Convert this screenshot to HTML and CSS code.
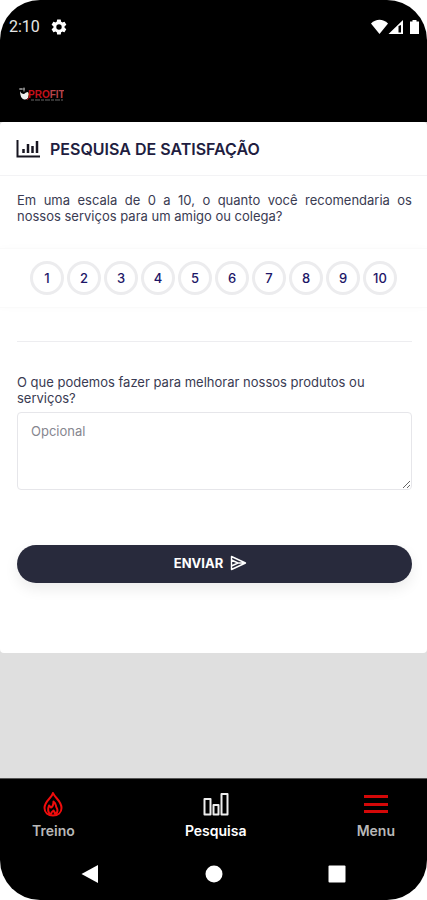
FILE: index.html
```html
<!DOCTYPE html>
<html lang="pt-BR">
<head>
<meta charset="utf-8">
<meta name="viewport" content="width=device-width, initial-scale=1">
<title>Pesquisa de Satisfação</title>
<link rel="stylesheet" href="styles.css">
</head>
<body>
<div class="phone">
  <div class="status-bar">
    <span class="clock">2:10</span>
    <svg class="gear" viewBox="0 0 24 24" width="18" height="18" aria-hidden="true"><path fill="#fff" d="M19.4 13a7.500 7.500 0 0 0 0-2l2.100-1.600a.5.5 0 0 0 .1-.7l-2-3.400a.5.5 0 0 0-.6-.2l-2.500 1a7.300 7.300 0 0 0-1.700-1L14.400 2.400a.5.5 0 0 0-.5-.4h-4a.5.5 0 0 0-.5.4L9 5.100a7.300 7.300 0 0 0-1.600 1l-2.500-1a.5.5 0 0 0-.6.200l-2 3.400a.5.5 0 0 0 .1.700L4.600 11a7.500 7.500 0 0 0 0 2l-2.200 1.600a.5.5 0 0 0-.1.700l2 3.400c.1.200.4.300.6.200l2.500-1c.5.400 1.100.8 1.700 1l.3 2.700c0 .2.200.4.500.4h4c.2 0 .5-.2.500-.4l.4-2.700a7.300 7.300 0 0 0 1.600-1l2.500 1c.2.100.5 0 .6-.2l2-3.400a.5.5 0 0 0-.1-.7zM12 15.600a3.600 3.600 0 1 1 0-7.200 3.600 3.600 0 0 1 0 7.200z"/></svg>
    <svg class="signals" viewBox="0 0 50 16" width="50" height="16" aria-hidden="true">
      <path fill="#fff" d="M0 4.500C5-.4 12-.4 17 4.500L8.500 15z"/>
      <path fill="#fff" fill-rule="evenodd" d="M32 1v14H17.500zM27.500 7v6.500H30V6z"/>
      <path fill="#fff" d="M39 2.500h2.500V1h4v1.500H48V15h-9z"/>
    </svg>
  </div>
  <header class="brand">
    <svg class="logo" viewBox="0 0 46 16" width="46" height="16" role="img" aria-label="Profit">
      <path fill="#eee" d="M2 5q1 3 4 3 2-2 4-2l1 2-1 4q-2 2-4 1.500Q2 12 2 5z"/>
      <path stroke="#aaa" stroke-width="1" fill="none" d="M1 3h6M6 1.500v4M3 2v2"/>
      <path stroke="#b00a12" stroke-width="1" fill="none" d="M9 14l3-4"/>
      <text x="10" y="12" class="logo-name"><tspan class="red">PRO</tspan><tspan class="pink">FIT</tspan></text>
      <path stroke="#666" stroke-width="1" stroke-dasharray="3 1 5 1" d="M13 14h32"/>
    </svg>
  </header>

  <main class="content">
    <form class="card">
      <div class="card-head">
        <svg viewBox="0 0 24 18" width="24" height="18" aria-hidden="true"><path fill="none" stroke="#171520" stroke-width="2" d="M1.500 0v16.500H24"/><path stroke="#171520" stroke-width="2.500" d="M7.500 9v4M12 4v9M16.500 6v7M21 1v12"/></svg>
        <h1>PESQUISA DE SATISFAÇÃO</h1>
      </div>
      <p class="question" id="score-label">Em uma escala de 0 a 10, o quanto você recomendaria os nossos serviços para um amigo ou colega?</p>
      <div class="scores" role="group" aria-labelledby="score-label">
        <button type="button">1</button>
        <button type="button">2</button>
        <button type="button">3</button>
        <button type="button">4</button>
        <button type="button">5</button>
        <button type="button">6</button>
        <button type="button">7</button>
        <button type="button">8</button>
        <button type="button">9</button>
        <button type="button">10</button>
      </div>
      <hr>
      <div class="field">
        <label for="comment">O que podemos fazer para melhorar nossos produtos ou serviços?</label>
        <textarea id="comment" placeholder="Opcional"></textarea>
      </div>
      <div class="actions">
        <button class="send" type="submit">ENVIAR
          <svg viewBox="0 0 17 16" width="17" height="16" aria-hidden="true"><path fill="none" stroke="#fff" stroke-width="1.400" stroke-linejoin="round" d="M1.500 1.500L15.500 8l-14 6.500zM1.500 5L8 8l-6.500 3M8 8h6"/></svg>
        </button>
      </div>
    </form>
  </main>

  <nav class="tabs">
    <a href="#treino">
      <svg viewBox="0 0 24 26" width="24" height="26" fill="none" stroke="#f00c0c" stroke-width="2" stroke-linejoin="round" aria-hidden="true"><path d="M12 2C11 7 3.500 10 3.500 17c0 4.500 3.500 7.500 8.500 7.500s8.500-3 8.500-7.500C20.500 10 14 7 12 2z"/><path d="M9 23.500C6 20 7 17 8 14.500l2 2c2-1 2.500-3.500 2.500-6 3 2 2 4.500 3 6 2 3 1 5-1 7M10 23.500c0-2 1-3 2.500-4 1 1 1.500 2 1.500 4"/></svg>
      <span>Treino</span>
    </a>
    <a href="#pesquisa" class="active" aria-current="page">
      <svg viewBox="0 0 26 26" width="26" height="26" fill="none" stroke="#eee" stroke-width="2" stroke-linejoin="round" aria-hidden="true"><path d="M1.500 8h6v15.500h-6zM10.500 14h5v9.500h-5zM18.500 3h6v20.500h-6z"/></svg>
      <span>Pesquisa</span>
    </a>
    <a href="#menu">
      <svg viewBox="0 0 24 26" width="24" height="26" aria-hidden="true"><path stroke="#d40808" stroke-width="3" d="M0 5.500h24M0 13.500h24M0 20.500h24"/></svg>
      <span>Menu</span>
    </a>
  </nav>
  <div class="system-nav">
    <button type="button" aria-label="Voltar"><svg viewBox="0 0 20 20" width="20" height="20"><path fill="#fff" d="M1.500 10L18 1v18z"/></svg></button>
    <button type="button" aria-label="Início"><svg viewBox="0 0 20 20" width="20" height="20"><circle cx="10" cy="10" r="8.500" fill="#fff"/></svg></button>
    <button type="button" aria-label="Recentes"><svg viewBox="0 0 20 20" width="20" height="20"><rect x="1.500" y="1.500" width="17" height="17" rx="1" fill="#fff"/></svg></button>
  </div>
</div>
</body>
</html>
```
FILE: styles.css
```css
* { box-sizing: border-box; }

body {
  margin: 0;
  background: #fff;
  font-family: Inter, Roboto, sans-serif;
  color: #3a3b52;
}

button { font: inherit; cursor: pointer; }

.phone {
  display: flex;
  flex-direction: column;
  min-height: 100vh;
  overflow: hidden;
  border-radius: 40px;
  background: #000;
}

.status-bar {
  display: flex;
  align-items: center;
  height: 54px;
  padding: 0 6px 0 9px;
  color: #e6e6e6;
}

.clock { font: 16px/20px Roboto, sans-serif; }
.gear { margin-left: 10px; }
.signals { margin-left: auto; }

.brand { height: 68px; padding: 32px 18px 0; }
.logo { display: block; }
.logo-name { font: 900 10px "Liberation Sans", sans-serif; }
.red { fill: #c4101a; }
.pink { fill: #b8444a; }

.content { flex: 1; background: #dfdfdf; }

.card {
  padding-bottom: 70px;
  border-radius: 4px;
  background: #fff;
}

.card-head {
  display: flex;
  align-items: center;
  gap: 10px;
  height: 54px;
  padding: 0 16px;
  border-bottom: 1px solid #f3f3f5;
}

h1 {
  margin: 0;
  font-size: 16px;
  font-weight: 600;
  line-height: 20px;
  color: #211d40;
}

.question {
  margin: 16px 15px 24px 17px;
  font-size: 13px;
  line-height: 16px;
  text-align: justify;
}

.scores {
  display: flex;
  justify-content: center;
  gap: 3px;
  padding: 12px 16px;
  border-top: 1px solid #fafafa;
  border-bottom: 1px solid #fafafa;
  box-shadow: 0 0 8px #00000005;
}

.scores button {
  width: 34px;
  height: 34px;
  padding: 0;
  border: 3px solid #ececee;
  border-radius: 50%;
  background: #fff;
  font-size: 13px;
  font-weight: 500;
  color: #1d1667;
}

hr {
  height: 1px;
  margin: 33px 15px 32px 17px;
  border: 0;
  background: #ededf0;
}

.field { margin: 0 15px 0 17px; }

label {
  display: block;
  margin-bottom: 6px;
  font-size: 13px;
  line-height: 16px;
}

textarea {
  display: block;
  width: 100%;
  height: 78px;
  padding: 9px 13px;
  border: 1px solid #e6e6ea;
  border-radius: 4px;
  resize: vertical;
  font: 13px/18px Inter, Roboto, sans-serif;
}

textarea::placeholder { color: #86868f; }

.actions { padding: 55px 15px 0 17px; }

.send {
  display: flex;
  align-items: center;
  justify-content: center;
  gap: 7px;
  width: 100%;
  height: 38px;
  padding: 0 8px 2px 0;
  border: 0;
  border-radius: 20px;
  background: #282a3c;
  box-shadow: 0 6px 14px #00000014;
  font-size: 13px;
  font-weight: 700;
  color: #fff;
}

.tabs {
  display: flex;
  justify-content: space-between;
  padding: 12px 32px 0;
  border-top: 1px solid #555;
}

.tabs a {
  display: flex;
  flex-direction: column;
  align-items: center;
  gap: 6px;
  font-size: 14px;
  font-weight: 600;
  line-height: 16px;
  color: #b8b8b8;
  text-decoration: none;
}

.tabs .active { color: #fff; }

.system-nav {
  display: flex;
  justify-content: space-between;
  padding: 25px 80px 16px;
}

.system-nav button {
  padding: 0;
  border: 0;
  background: none;
  line-height: 0;
}
```
